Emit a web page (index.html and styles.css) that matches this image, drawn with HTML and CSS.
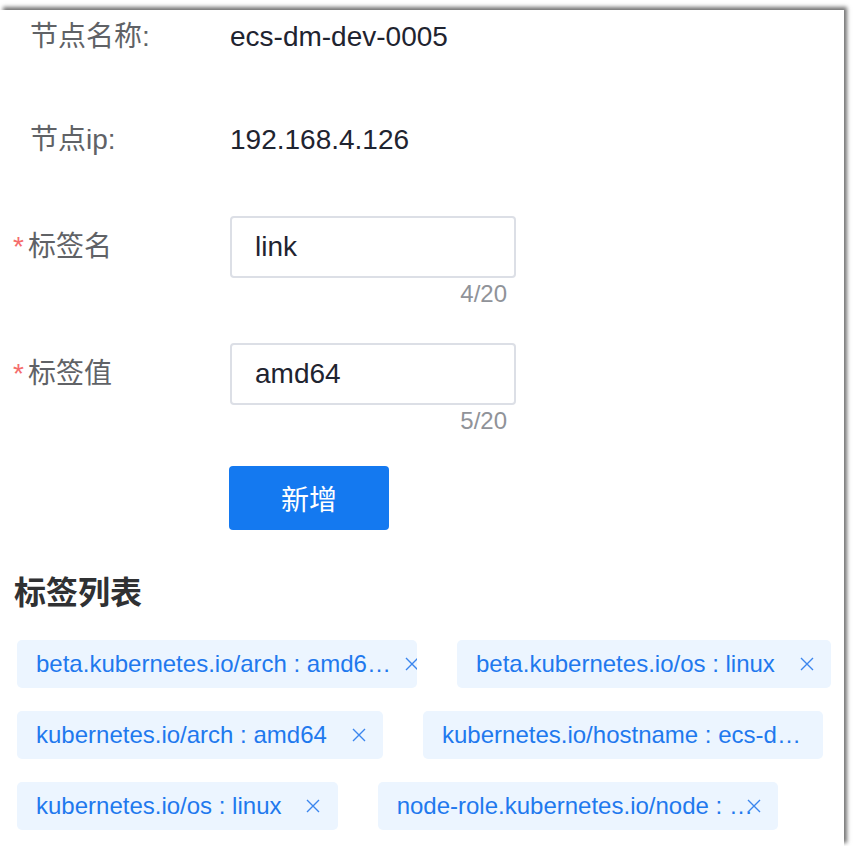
FILE: index.html
```html
<!DOCTYPE html>
<html lang="zh-CN">
<head>
<meta charset="utf-8">
<title>节点标签</title>
<link rel="stylesheet" href="styles.css">
</head>
<body>
<div class="frame">
  <div class="form">
    <div class="row row--static">
      <div class="label label--plain">节点名称:</div>
      <div class="value">ecs-dm-dev-0005</div>
    </div>
    <div class="row row--static">
      <div class="label label--plain">节点ip:</div>
      <div class="value">192.168.4.126</div>
    </div>
    <div class="row row--field">
      <div class="label label--required"><span class="req">*</span>标签名</div>
      <div class="control">
        <div class="input">link</div>
        <div class="count">4/20</div>
      </div>
    </div>
    <div class="row row--field row--last">
      <div class="label label--required"><span class="req">*</span>标签值</div>
      <div class="control">
        <div class="input">amd64</div>
        <div class="count">5/20</div>
      </div>
    </div>
    <div class="row row--action">
      <div class="label"></div>
      <button class="btn" type="button">新增</button>
    </div>
  </div>

  <h2 class="section-title">标签列表</h2>

  <div class="tags">
    <div class="tag"><span class="tag-text">beta.kubernetes.io/arch : amd64 </span><span class="tag-close"><svg viewBox="0 0 16 16" width="16" height="16"><path d="M2 2 L14 14 M14 2 L2 14"/></svg></span></div>
    <div class="tag"><span class="tag-text">beta.kubernetes.io/os : linux </span><span class="tag-close"><svg viewBox="0 0 16 16" width="16" height="16"><path d="M2 2 L14 14 M14 2 L2 14"/></svg></span></div>
    <div class="tag"><span class="tag-text">kubernetes.io/arch : amd64 </span><span class="tag-close"><svg viewBox="0 0 16 16" width="16" height="16"><path d="M2 2 L14 14 M14 2 L2 14"/></svg></span></div>
    <div class="tag"><span class="tag-text">kubernetes.io/hostname : ecs-dm-dev-0005 </span><span class="tag-close"><svg viewBox="0 0 16 16" width="16" height="16"><path d="M2 2 L14 14 M14 2 L2 14"/></svg></span></div>
    <div class="tag"><span class="tag-text">kubernetes.io/os : linux </span><span class="tag-close"><svg viewBox="0 0 16 16" width="16" height="16"><path d="M2 2 L14 14 M14 2 L2 14"/></svg></span></div>
    <div class="tag"><span class="tag-text">node-role.kubernetes.io/node : </span><span class="tag-close"><svg viewBox="0 0 16 16" width="16" height="16"><path d="M2 2 L14 14 M14 2 L2 14"/></svg></span></div>
  </div>
</div>
</body>
</html>
```

FILE: styles.css
```css
* {
  box-sizing: border-box;
}

html, body {
  margin: 0;
  padding: 0;
  background: #ffffff;
}

body {
  font-family: "Liberation Sans", "Noto Sans CJK SC", sans-serif;
  overflow: hidden;
}

.frame {
  margin-top: 10px;
  width: 844px;
  height: 836px;
  background: #ffffff;
  box-shadow: 3px -3px 4px rgba(0, 0, 0, 0.55);
}

.form {
  display: flex;
  flex-direction: column;
}

.row {
  display: grid;
  grid-template-columns: 230px 286px;
  align-items: start;
}

.row--static {
  margin-bottom: 49px;
  line-height: 54px;
}

.row--field {
  margin-bottom: 33px;
}

.row--last {
  margin-bottom: 29px;
}

.label {
  font-size: 28px;
  color: #606266;
  white-space: nowrap;
}

.label--plain {
  padding-left: 30px;
}

.label--required {
  padding-left: 13px;
  line-height: 62px;
}

.req {
  color: #f56c6c;
  margin-right: 4px;
}

.value {
  font-size: 28px;
  color: #1f2430;
  white-space: nowrap;
}

.control {
  display: flex;
  flex-direction: column;
}

.input {
  height: 62px;
  border: 2px solid #dcdfe6;
  border-radius: 4px;
  padding-left: 23px;
  font-size: 28px;
  line-height: 58px;
  color: #1f2430;
}

.count {
  text-align: right;
  padding-right: 9px;
  font-size: 24px;
  line-height: 32px;
  color: #909399;
}

.row--action {
  margin-left: -1px;
}

.btn {
  width: 160px;
  height: 64px;
  border: none;
  border-radius: 4px;
  background: #1479f0;
  color: #ffffff;
  font-family: "Liberation Sans", "Noto Sans CJK SC", sans-serif;
  font-size: 28px;
  padding: 0;
  cursor: pointer;
}

.section-title {
  margin: 41px 0 0 14px;
  font-size: 32px;
  line-height: 44px;
  font-weight: bold;
  color: #303133;
}

.tags {
  margin: 25px 0 0 17px;
  width: 826px;
  display: flex;
  flex-wrap: wrap;
  column-gap: 40px;
  row-gap: 23px;
}

.tag {
  position: relative;
  display: block;
  max-width: 400px;
  height: 48px;
  padding: 0 16px 0 19px;
  border-radius: 5px;
  background: #ecf5ff;
  color: #1f79ee;
  font-size: 24px;
  line-height: 48px;
  white-space: nowrap;
  overflow: hidden;
  text-overflow: ellipsis;
}

.tag-text {
  white-space: pre;
  padding-right: 33.5px;
}

.tag-close {
  position: absolute;
  width: 16px;
  height: 16px;
  margin-left: -16.5px;
  margin-top: 16px;
}

.tag-close svg {
  display: block;
  fill: none;
  stroke: #3b86ee;
  stroke-width: 1.4;
}
```
